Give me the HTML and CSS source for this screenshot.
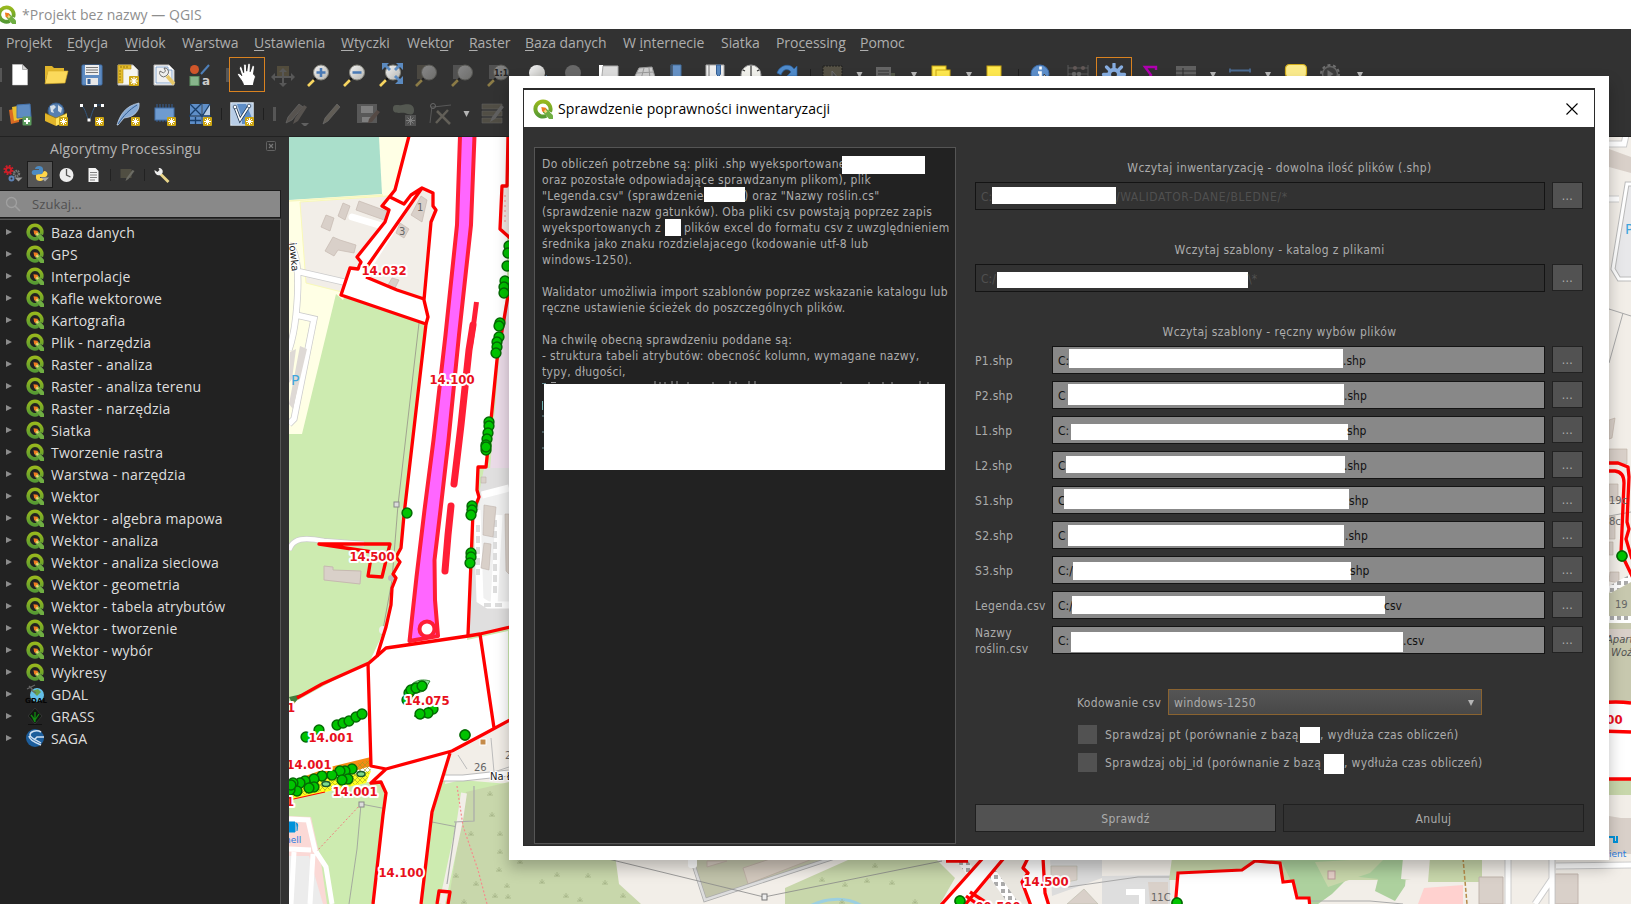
FILE: index.html
```html
<!DOCTYPE html>
<html lang="pl">
<head>
<meta charset="utf-8">
<title>Projekt bez nazwy — QGIS</title>
<link rel="stylesheet" href="styles.css">
</head>
<body>
<svg width="0" height="0" class="defs" aria-hidden="true">
  <defs>
    <linearGradient id="qg" x1="0" y1="0" x2="0" y2="1"><stop offset="0" stop-color="#97b81e"/><stop offset="1" stop-color="#569a33"/></linearGradient>
    <linearGradient id="lens" x1="0" y1="0" x2="1" y2="1"><stop offset="0" stop-color="#f4f4f4"/><stop offset="1" stop-color="#b4b4b0"/></linearGradient>
    <symbol id="q" viewBox="0 0 18 18">
      <path d="M9 2.200a6.800 6.800 0 1 0 3 12.900M15.300 11.500a6.800 6.800 0 0 0-6.300-9.300" fill="none" stroke="url(#qg)" stroke-width="3.600"/>
      <path d="M9 9l3-.5 6 6.200V18h-3.500L9 12z" fill="#6fae42"/>
      <path d="M7.500 7.200l4 .6.5 1.800-2 2.200-1.800-.5z" fill="#ef7c20"/>
      <path d="M11 9.500l2 1.700-1.800 1.600-1.400-1.800z" fill="#f4d27a"/>
    </symbol>
    <symbol id="star" viewBox="0 0 9 9"><rect width="9" height="9" rx="1" fill="#cda612"/><path d="M4.500 1v7M1 4.500h7M2 2l5 5M7 2L2 7" stroke="#fff" stroke-width="1"/></symbol>
    <symbol id="glass" viewBox="0 0 24 24"><path d="M1 23l6-6" stroke="#f7d560" stroke-width="2.600"/><path d="M7 17l2-2" stroke="#111" stroke-width="2"/><circle cx="14" cy="9.500" r="7.500" fill="url(#lens)" stroke="#85857c"/></symbol>
    <symbol id="arrow" viewBox="0 0 8 8"><path d="M1 1h6L4 7z" fill="#b5b5b5"/></symbol>
    <marker id="dot" viewBox="0 0 12 12" refX="6" refY="6" markerWidth="12" markerHeight="12" markerUnits="userSpaceOnUse"><circle cx="6" cy="6" r="4.900" fill="#00c400" stroke="#046b04" stroke-width="1.500"/></marker>
    <marker id="tuft" viewBox="0 0 6 5" refX="3" refY="3" markerWidth="6" markerHeight="5" markerUnits="userSpaceOnUse"><path d="M0 4h6M3 4V0M3 4L1 1.500M3 4l2-2.500" stroke="#a3b387" stroke-width=".8" fill="none"/></marker>
    <pattern id="cobble" width="7" height="7" patternUnits="userSpaceOnUse"><rect width="7" height="7" fill="#fff"/><rect width="4" height="4" fill="#aaa"/></pattern>
    <pattern id="hatch" width="5" height="5" patternUnits="userSpaceOnUse"><path d="M0 0l5 5M5 0L0 5" stroke="#9aa020" stroke-width=".6"/></pattern>
  </defs>
</svg>

<div class="app">
  <header class="titlebar">
    <svg class="title-logo"><use href="#q"/></svg><span class="title-text">*Projekt bez nazwy — QGIS</span>
  </header>

  <nav class="menubar">
    <span>Pro<u>j</u>ekt</span><span><u>E</u>dycja</span><span><u>W</u>idok</span><span>W<u>a</u>rstwa</span><span><u>U</u>stawienia</span><span><u>W</u>tyczki</span><span>Wekt<u>o</u>r</span><span><u>R</u>aster</span><span><u>B</u>aza danych</span><span>W <u>i</u>nternecie</span><span>Siatka</span><span>Pro<u>c</u>essing</span><span><u>P</u>omoc</span>
  </nav>

  <div class="toolbar toolbar-main">
    <i class="grip first"></i>
    <svg viewBox="0 0 24 24"><path d="M4.500 1.500h10l5 5V22h-15z" fill="#fff" stroke="#ccc" stroke-width=".5"/><path d="M14.500 1.500v5h5z" fill="#d6d6d6" stroke="#888" stroke-width=".6"/></svg>
    <svg viewBox="0 0 24 24"><path d="M1 3h7l2 2h10v4H4L1 20z" fill="#e0b52b"/><path d="M4 8h20l-3 12-20 .8z" fill="#fbd95b" stroke="#d8ad27" stroke-width=".6"/></svg>
    <svg viewBox="0 0 24 24"><rect x="2" y="2" width="20" height="20" rx="1" fill="#5f8cc2" stroke="#4473ac"/><rect x="5" y="2" width="14" height="10" fill="#eee"/><path d="M6 4.500h12M6 7h12M6 9.500h12" stroke="#777"/><rect x="6" y="15" width="12" height="7" fill="#e8e8e8"/><rect x="7.500" y="16" width="3" height="5" fill="#345f96"/></svg>
    <svg viewBox="0 0 24 24"><path d="M2 2h15l5 5v15H2z" fill="#f5f5f0" stroke="#bbb"/><path d="M2 2h13v4H7v14H2z" fill="#e4bc2c" stroke="#b28a10" stroke-width=".6"/><path d="M5 3v2M8 3v2M11 3v2M3 8h2M3 11h2M3 14h2M3 17h2" stroke="#7a5b00" stroke-width=".7"/><use href="#star" x="13" y="13" width="10" height="10"/></svg>
    <svg viewBox="0 0 24 24"><path d="M2 2h15l5 5v15H2z" fill="#fff" stroke="#bbb"/><path d="M4 4h12v3h4v13H4z" fill="#f0f0f0" stroke="#6d95c7" stroke-width=".8"/><path d="M15 13l7 8" stroke="#e7c869" stroke-width="3.500"/><path d="M8 8a4 4 0 0 0 6 5l2-2a4 4 0 0 0-4-6l1.500 3-2 2z" fill="#eee" stroke="#555" stroke-width=".8"/></svg>
    <svg viewBox="0 0 24 24"><circle cx="6.500" cy="6.500" r="4.500" fill="#d0562a"/><path d="M13 11L21 2" stroke="#4f80ba" stroke-width="2"/><rect x="2" y="13.500" width="9" height="9" fill="#87b58b" stroke="#5c8d61"/><text x="14" y="22" class="glyph-a">a</text></svg>
    <i class="grip mid"></i>
    <svg class="framed hand" viewBox="0 0 24 24"><path d="M8.500 23.500C8 19 3.500 15.500 2 12c.5-1.700 2.800-1.200 4.500 1.200L4 5.500c0-2.200 2.200-2.200 2.800-.5L8.500 10V2.500c.2-2 2.500-1.800 2.800 0l.4 6L12.800 1.500c.4-1.700 2.500-1.400 2.700.3l-.2 7.200L17.300 3.500c.6-1.500 2.600-1 2.500.8l-1 7.500c2.200 1 2.500 3 1 5.500l-1.300 6.200z" fill="#fff" stroke="#222" stroke-width=".9"/></svg>
    <svg viewBox="0 0 24 24" class="dim"><rect x="6" y="3" width="12" height="12" fill="#7a6c4a"/><path d="M12 6v16M4 14h16" stroke="#888" stroke-width="2"/><path d="M12 24l-4-4h8zM0 14l4-4v8zM24 14l-4-4v8zM12 5L8 9h8z" fill="#888"/></svg>
    <svg viewBox="0 0 24 24"><use href="#glass"/><path d="M14 5v9M9.500 9.500h9" stroke="#4a7ab5" stroke-width="2.500"/></svg>
    <svg viewBox="0 0 24 24"><use href="#glass"/><path d="M9.500 9.500h9" stroke="#4a7ab5" stroke-width="2.500"/></svg>
    <svg viewBox="0 0 24 24"><use href="#glass"/><path d="M3 0h7L8 2l4 4-2 2-4-4-3 3zM24 0h-7l2 2-4 4 2 2 4-4 3 3zM24 21v-8l-3 3-4-4-2 2 4 4-3 3z" fill="#5b8ac0"/></svg>
    <svg viewBox="0 0 24 24" class="dim"><rect x="2" y="2" width="14" height="14" fill="#6b6454"/><use href="#glass"/></svg>
    <svg viewBox="0 0 24 24" class="dim"><rect x="2" y="2" width="14" height="14" fill="#777"/><use href="#glass"/></svg>
    <svg viewBox="0 0 24 24" class="dim"><rect x="2" y="2" width="14" height="14" fill="#777"/><use href="#glass"/><text x="7" y="13" class="one">1:1</text></svg>
    <svg viewBox="0 0 24 24"><circle cx="14" cy="10" r="8" fill="url(#lens)"/><path d="M17 17l7-5v9z" fill="#5b8ac0"/></svg>
    <svg viewBox="0 0 24 24" class="dim"><circle cx="14" cy="10" r="8" fill="#aaa"/></svg>
    <svg viewBox="0 0 24 24"><path d="M4 2h4v20H4z" fill="#fff"/><path d="M8 3h15v19H6z" fill="#dcdcdc" stroke="#aaa"/><use href="#star" x="16" y="13.500" width="9" height="9"/></svg>
    <svg viewBox="0 0 24 24"><path d="M8 5l13-1 3 10-22 3z" fill="#ccc" stroke="#999"/><path d="M6 10l17-1M13 5l-3 11M18 5l1 11" stroke="#999"/></svg>
    <svg viewBox="0 0 24 24"><path d="M4 2h10v20H4z" fill="#6692c6" stroke="#44709f"/><path d="M5 2v20" stroke="#333"/><use href="#star" x="13" y="13.500" width="9" height="9"/></svg>
    <svg viewBox="0 0 24 24"><path d="M3 2h18v20H3z" fill="#eee" stroke="#aaa"/><path d="M6 2v20" stroke="#777"/><path d="M13.500 2h4v9l-2 3-2-3z" fill="#5b8ac0" stroke="#345f96"/></svg>
    <svg viewBox="0 0 24 24"><circle cx="12" cy="12" r="10" fill="#f1f1ec" stroke="#999"/><path d="M12 4v9l4 3M12 2.500v2M4 7l2 1M20 7l-2 1" stroke="#333" stroke-width="1.200" fill="none"/></svg>
    <svg viewBox="0 0 24 24"><path d="M2 10C5 1 16 0 19 6l3-3v10H12l4-4c-3-4-8-3-10 3z" fill="#4f8bcb" stroke="#2b62a0" stroke-width=".7"/></svg>
    <i class="rule w10"></i>
    <svg viewBox="0 0 24 24" class="dim2"><rect x="2" y="3" width="19" height="18" fill="#6d6653" stroke="#15150f" stroke-dasharray="2 1"/><path d="M11 8v12l3-3h5z" fill="#555" stroke="#999"/></svg>
    <svg viewBox="0 0 8 8" class="drop w17"><use href="#arrow"/></svg>
    <svg viewBox="0 0 24 24" class="dim2"><path d="M2 4h15v18H2z" fill="#888"/><path d="M4 8h11M4 11h11M4 14h11" stroke="#333"/><path d="M17 10h4v10h-4z" fill="#687058"/></svg>
    <svg viewBox="0 0 8 8" class="drop w20"><use href="#arrow"/></svg>
    <svg viewBox="0 0 24 24"><rect x="2" y="3" width="14" height="13" fill="#ffe94f" stroke="#c9a514"/><rect x="6" y="7" width="14" height="12" fill="#ffe94f" stroke="#c9a514"/><rect x="14" y="14" width="8" height="5" fill="#dd4b45"/></svg>
    <svg viewBox="0 0 8 8" class="drop w18"><use href="#arrow"/></svg>
    <svg viewBox="0 0 24 24"><rect x="3" y="3" width="14" height="16" fill="#ffe94f" stroke="#c9a514"/><circle cx="20" cy="16" r="3" fill="#5b8ac0"/></svg>
    <i class="rule w9"></i>
    <svg viewBox="0 0 24 24"><circle cx="11" cy="11" r="9" fill="#5d8fcb" stroke="#3c6dab"/><path d="M11.500 3.500v3M9 9.500h2.500v7" stroke="#fff" stroke-width="2.600" fill="none"/><path d="M15 11v9l6-3z" fill="#fff" stroke="#222" stroke-width=".7"/></svg>
    <svg viewBox="0 0 24 24" class="dim abacus"><path d="M2 2v20M22 2v20M2 5h20M2 11h20" stroke="#8a8a8a"/><circle cx="9" cy="5" r="2" fill="#a08784"/><circle cx="17" cy="5" r="2" fill="#a08784"/><circle cx="8" cy="11" r="2.200" fill="#aaa"/><circle cx="13" cy="11" r="2.200" fill="#aaa"/></svg>
    <svg class="framed" viewBox="0 0 24 24"><path d="M12 1v22M1 12h22M4.200 4.200l15.600 15.600M19.800 4.200L4.200 19.800" stroke="#86ade0" stroke-width="3.400" stroke-linecap="round"/><circle cx="12" cy="12" r="7" fill="#86ade0"/><circle cx="12" cy="12" r="3" fill="#323232"/></svg>
    <svg viewBox="0 0 24 24"><path d="M18 7V4H7l6 8-6 8h11v-3" fill="none" stroke="#b000b0" stroke-width="2.400"/></svg>
    <svg viewBox="0 0 24 24" class="dim2"><rect x="2" y="3" width="20" height="19" fill="#808080"/><path d="M2 8h20M2 12h20M2 16h20M9 5v17" stroke="#333" stroke-width="1.200"/></svg>
    <svg viewBox="0 0 8 8" class="drop w18"><use href="#arrow"/></svg>
    <svg viewBox="0 0 24 24"><path d="M2 5.500v4M22 5.500v4M2 7.500h20" stroke="#4b6b92" stroke-width="1.800"/><path d="M2 14h20v6H2z" fill="#eee"/><path d="M5 14v3M8 14v3M11 14v3M14 14v3M17 14v3" stroke="#333"/></svg>
    <svg viewBox="0 0 8 8" class="drop w20"><use href="#arrow"/></svg>
    <svg viewBox="0 0 24 24"><rect x="1.500" y="1.500" width="21" height="13" rx="4" fill="#fbeb8d" stroke="#d1ac1b" stroke-width="1.200"/><path d="M9 14l4 4v-4z" fill="#fbeb8d"/></svg>
    <svg viewBox="0 0 24 24" class="w32 dim2"><circle cx="12" cy="11" r="9" fill="none" stroke="#999" stroke-width="2" stroke-dasharray="3 2.650"/><circle cx="12" cy="11" r="7.500" fill="#444" stroke="#888" stroke-width="1.500"/><path d="M9.500 7v8l6-4z" fill="#999"/></svg>
    <svg viewBox="0 0 8 8" class="drop w28"><use href="#arrow"/></svg>
  </div>

  <div class="toolbar toolbar-layers">
    <i class="grip first"></i>
    <svg viewBox="0 0 24 24"><path d="M1 8l10-2v14l-8 2z" fill="#d96a23"/><path d="M4 5l11-2 2 13-11 3z" fill="#eabf2d"/><path d="M9 3l13-1 1 13-14 1z" fill="#5f8cc2" stroke="#4473ac"/><rect x="14.500" y="14.500" width="9" height="9" rx="1" fill="#5c9c5e"/><path d="M19 16v6M16 19h6" stroke="#fff" stroke-width="2"/></svg>
    <svg viewBox="0 0 24 24"><circle cx="12" cy="9" r="8" fill="#567fb0" stroke="#375d8b"/><path d="M6 4l4-1 2 2-3 3 1 3-3-1zM14 3l4 3-1 5-3-2z" fill="#d5dfe8"/><path d="M1 11l11 5v8L1 19z" fill="#e2b52a"/><path d="M12 16l11-5v8l-11 5z" fill="#ffe45e"/><path d="M1 11l11 5 11-5" fill="none" stroke="#8b6c0c" stroke-width=".7"/><use href="#star" x="15" y="15" width="9" height="9"/></svg>
    <svg viewBox="0 0 24 24"><path d="M1 3c5 4 5 11 8 15 3-3 3-12 8-15h6" fill="none" stroke="#31567f" stroke-width="1"/><path d="M0 2h3v3H0zM14 2h3v3h-3zM21 2h3v3h-3zM7.500 16.500h3v3h-3z" fill="#fff"/><use href="#star" x="15" y="15" width="9" height="9"/></svg>
    <svg viewBox="0 0 24 24"><path d="M1 23C4 13 9 4 23 1c1 7-4 14-15 15L2 23z" fill="#88abd5" stroke="#c9daee" stroke-width=".7"/><path d="M2 22C8 13 13 8 21 3" stroke="#345f96" fill="none"/><use href="#star" x="15" y="15" width="9" height="9"/></svg>
    <svg viewBox="0 0 24 24"><path d="M5 2v18M8 2v18M11 2v18M14 2v18M17 2v18M20 2v18" stroke="#345f96"/><rect x="3" y="6" width="19" height="12" fill="#6e9bd0" stroke="#4473ac"/><use href="#star" x="15" y="15" width="9" height="9"/></svg>
    <svg viewBox="0 0 24 24"><rect x="2" y="2" width="20" height="20" fill="#b9cde4"/><path d="M2 2h11v11H2zM15 2h7L15 13zM2 15h11v7H2z" fill="#5e8ec8"/><path d="M2 2l11 11M13 2L2 13M15 13l7-11M2 18.500h11M7.500 15v7M14 1v22M1 14h22" stroke="#183d68" stroke-width="1.300"/><use href="#star" x="15" y="15" width="9" height="9"/></svg>
    <i class="rule w6"></i>
    <svg viewBox="0 0 24 24"><rect x="1" y="1" width="22" height="22" fill="#5e8ec8" stroke="#dce7f3" stroke-width="1.500"/><path d="M2 2l5 0 5 14V22H2zM16 2h6v14z" fill="#b8cde6"/><path d="M5 5l5 13 9-14" fill="none" stroke="#1e3550" stroke-width="3.200"/><path d="M5 5l5 13 9-14" fill="none" stroke="#fff" stroke-width="1.600"/><circle cx="5" cy="5" r="1.800" fill="#fff" stroke="#1e3550" stroke-width=".7"/><circle cx="19" cy="4" r="1.800" fill="#fff" stroke="#1e3550" stroke-width=".7"/><use href="#star" x="15" y="15" width="9" height="9"/></svg>
    <i class="rule w6"></i>
    <i class="grip mid2"></i>
    <svg viewBox="0 0 24 24" class="dim"><path d="M2 21l2-6L15 2l4 3L8 18z" fill="#857b73" stroke="#aaa" stroke-width=".7"/><path d="M9 22l2-6L20 3l3 2-9 14z" fill="#857b73"/><path d="M17 21h8l-4 4z" fill="#999"/></svg>
    <svg viewBox="0 0 24 24" class="dim"><path d="M3 22l2-6L17 2l3 3L8 19z" fill="#9a9383" stroke="#bbb" stroke-width=".6"/></svg>
    <svg viewBox="0 0 24 24" class="dim"><rect x="1" y="2" width="20" height="19" fill="#888"/><path d="M5 4h12v7H5zM6 15h9v5H6z" fill="#ddd"/><path d="M12 21l1-4 8-9 3 2-8 10z" fill="#80675d"/></svg>
    <svg viewBox="0 0 24 24" class="dim"><path d="M1 7c0-6 5-3 9-4s12-2 12 5-6 4-9 3-12 2-12-4z" fill="#7f8878"/><rect x="13" y="13" width="11" height="11" fill="#777"/><path d="M18.500 14v9M14 18.500h9M15.500 15.500l6 6M21.500 15.500l-6 6" stroke="#ddd"/></svg>
    <svg viewBox="0 0 24 24" class="dim"><path d="M4 4l-2 17M5 5l18-2" stroke="#888"/><circle cx="5" cy="4" r="2.500" fill="none" stroke="#aaa"/><path d="M8 21L20 8M9 9l13 13" stroke="#9c9686" stroke-width="2.500"/></svg>
    <svg viewBox="0 0 8 8" class="drop w17"><use href="#arrow"/></svg>
    <svg viewBox="0 0 24 24" class="dim"><path d="M1 2h20v5H1zM1 9h20v5H1zM1 16h20v5H1z" fill="#77705c" stroke="#999" stroke-width=".6"/><path d="M9 20l2-5L20 3l3 2-9 12z" fill="#999"/></svg>
  </div>

  <main class="workspace">
    <aside class="panel">
      <div class="panel-title"><span>Algorytmy Processingu</span><svg class="panel-close" viewBox="0 0 10 10"><rect x=".5" y=".5" width="9" height="9" rx="1" fill="none" stroke="#626262"/><path d="M3 3l4 4M7 3L3 7" stroke="#777" stroke-width="1.200"/></svg></div>
      <div class="panel-tools">
        <svg viewBox="0 0 20 20" class="ptool"><circle cx="5" cy="5" r="3.600" fill="none" stroke="#cc1e28" stroke-width="3" stroke-dasharray="1.600 1.200"/><circle cx="5" cy="5" r="2.500" fill="none" stroke="#cc1e28" stroke-width="2"/><circle cx="13" cy="8.500" r="2.500" fill="none" stroke="#777" stroke-width="2.500" stroke-dasharray="1.500 .6"/><circle cx="8" cy="13.500" r="2" fill="none" stroke="#5d82b5" stroke-width="2"/><path d="M11 12.500h8l-4 4z" fill="#999"/></svg>
        <span class="ptool on"><svg viewBox="0 0 20 20"><path d="M4 10c-3 0-3-5 0-5h5V4H5c0-4 8-4 8 0v4c0 2-6 1-7 2z" fill="#4c8ac2"/><path d="M14 6c5 0 4 6 1 6h-5v1h4c0 4-8 4-8 0 0-5 0-3 6-4z" fill="#ffd54a"/><path d="M11 12.500h8l-4 4z" fill="#aaa"/></svg></span>
        <svg viewBox="0 0 20 20" class="ptool"><circle cx="10" cy="10" r="7" fill="#eee"/><path d="M10 4v6l4 2" fill="none" stroke="#555" stroke-width="1.300"/></svg>
        <svg viewBox="0 0 20 20" class="ptool"><path d="M5 3h7l3 3v11H5z" fill="#f4f4f4"/><path d="M6.500 7.500h7M6.500 10h7M6.500 12.500h7M6.500 15h5" stroke="#777" stroke-width=".9"/></svg>
        <i class="prule"></i>
        <svg viewBox="0 0 20 20" class="ptool"><path d="M3 4h11v9H3z" fill="#504e42"/><path d="M8 16l1-3 6-8 2 1-6 8z" fill="#6c6c64"/></svg>
        <i class="prule"></i>
        <svg viewBox="0 0 20 20" class="ptool"><path d="M9 9l8 8" stroke="#ead68a" stroke-width="2.800"/><path d="M3 5c0 4 3 6 6 5l2-2c1-3-1-5-4-5l1 2-2 2z" fill="#eee"/></svg>
      </div>
      <div class="search"><svg viewBox="0 0 16 16"><circle cx="6.500" cy="6.500" r="5" fill="none" stroke="#a0a0a0" stroke-width="1.300"/><path d="M10 10l5 5" stroke="#a0a0a0" stroke-width="1.600"/></svg><span>Szukaj...</span></div>
      <ul class="tree">
        <li><i></i><svg><use href="#q"/></svg>Baza danych</li>
        <li><i></i><svg><use href="#q"/></svg>GPS</li>
        <li><i></i><svg><use href="#q"/></svg>Interpolacje</li>
        <li><i></i><svg><use href="#q"/></svg>Kafle wektorowe</li>
        <li><i></i><svg><use href="#q"/></svg>Kartografia</li>
        <li><i></i><svg><use href="#q"/></svg>Plik - narzędzia</li>
        <li><i></i><svg><use href="#q"/></svg>Raster - analiza</li>
        <li><i></i><svg><use href="#q"/></svg>Raster - analiza terenu</li>
        <li><i></i><svg><use href="#q"/></svg>Raster - narzędzia</li>
        <li><i></i><svg><use href="#q"/></svg>Siatka</li>
        <li><i></i><svg><use href="#q"/></svg>Tworzenie rastra</li>
        <li><i></i><svg><use href="#q"/></svg>Warstwa - narzędzia</li>
        <li><i></i><svg><use href="#q"/></svg>Wektor</li>
        <li><i></i><svg><use href="#q"/></svg>Wektor - algebra mapowa</li>
        <li><i></i><svg><use href="#q"/></svg>Wektor - analiza</li>
        <li><i></i><svg><use href="#q"/></svg>Wektor - analiza sieciowa</li>
        <li><i></i><svg><use href="#q"/></svg>Wektor - geometria</li>
        <li><i></i><svg><use href="#q"/></svg>Wektor - tabela atrybutów</li>
        <li><i></i><svg><use href="#q"/></svg>Wektor - tworzenie</li>
        <li><i></i><svg><use href="#q"/></svg>Wektor - wybór</li>
        <li><i></i><svg><use href="#q"/></svg>Wykresy</li>
        <li><i></i><svg viewBox="0 0 18 18"><circle cx="11" cy="10" r="7" fill="#63bfe8"/><path d="M6 6l6-2 3 3-4 4-2-2z" fill="#6aa04a"/><path d="M1 4l8-4M3 1l4 4M5 5l5 3" stroke="#666" stroke-width="1.300"/><text x="-1" y="18" class="gdal">GDAL</text></svg>GDAL</li>
        <li><i></i><svg viewBox="0 0 18 18"><path d="M9 1l7 8-7 8-7-8z" fill="#111a11" stroke="#333"/><path d="M9 15V5M9 13L5 8M9 13l4-6M9 15l-2-4" stroke="#128c12" stroke-width="1.300"/><path d="M2 17.500h14" stroke="#111"/></svg>GRASS</li>
        <li><i></i><svg viewBox="0 0 18 18"><circle cx="9" cy="9" r="9" fill="#1c5d9b"/><path d="M15 3C10 0 4 3 4 6s8 6 11 8M18 8h-7l-3 3M3 7c0 4 7 7 12 9" stroke="#cfe0f2" stroke-width="1.500" fill="none"/></svg>SAGA</li>
      </ul>
    </aside>

    <svg class="map" viewBox="289 137 1342 767">
      <rect x="289" y="137" width="1342" height="767" fill="#f2eee8"/>
      <!-- land cover, west -->
      <path d="M289 137h220v767H289z" fill="#cdebb0"/>
      <path d="M289 137h125l-21 53-50 110-7-6-34 140h-13z" fill="#ffffe5"/>
      <path d="M289 137h90l3 57-93 6z" fill="#aadfcb"/>
      <path d="M289 201l94-6" stroke="#f7f7c0" stroke-width="1.500"/>
      <path d="M300 202l87-6 50-10-6 115-50 5-39-14-36-9z" fill="#f2eee8" stroke="#f9f9b8"/>
      <path d="M289 245c8 5 11 30 7 70l18 4-20 100-5 5M296 271l48 11M289 350c5-15 6-25 7-35" fill="none" stroke="#ccc" stroke-width="7"/>
      <path d="M289 245c8 5 11 30 7 70l18 4-20 100-5 5M296 271l48 11M289 350c5-15 6-25 7-35" fill="none" stroke="#fff" stroke-width="5.500"/>
      <path d="M300 346l7 3-14 60-4-5zM290 352l6-3-4 30-3 4z" fill="#ded9d5"/>
      <path d="M352 217l30 9" stroke="#fff" stroke-width="7" stroke-linecap="round"/>
      <g fill="#d9d0c9" stroke="#c6b9b0" stroke-width=".7"><path d="M326 215l8 3-4 13-9-4zM343 203l7 3-5 14-7-4zM359 201l30 11-2 9-31-11zM333 237l7 3 16 5-2 8-16-3-4 6-9-5zM420 197l7 4-5 22-11-7zM400 223l9 6-5 9-8-5zM392 278l7 2-4 8-7-3z"/></g>
      <path d="M324 566l9 1v3l28 1-1 13-36-4z" fill="#d9d0c9" stroke="#c6b9b0"/>
      <path d="M289 550c4-12 15-13 35-9l40 3" fill="none" stroke="#ccc" stroke-width="6"/><path d="M289 550c4-12 15-13 35-9l40 3" fill="none" stroke="#fff" stroke-width="4.500"/>
      <path d="M419 323l-21 182-6 75-10 55" fill="none" stroke="#9c9c8c" stroke-width=".9"/>
      <rect x="394" y="502" width="5" height="5" fill="#ddd" stroke="#888"/><circle cx="391" cy="578" r="3" fill="#bbb"/><circle cx="383" cy="630" r="4" fill="#eee"/>
      <!-- southwest: fuel station and roads -->
      <path d="M289 816l22 1 10 45 6 42h-38z" fill="#fbd9d6"/>
      <path d="M289 856h20l14 48h-34z" fill="#ececec"/>
      <path d="M289 819l19 1 7 30 11 17 6 37M289 849l22 1M294 852l-3 52M313 854l-3 50" fill="none" stroke="#fff" stroke-width="5"/>
      <path d="M361 804l-44 47" stroke="#f08080" stroke-dasharray="2 2"/>
      <path d="M361 804l-4 45-8 55M361 804l26 5M432 822l77 15" stroke="#999" fill="none" stroke-width=".8"/><rect x="359" y="802" width="5" height="5" fill="#ddd" stroke="#888"/>
      <path d="M289 822h6v10h-6zM296 823c3 0 1 6 1 8" fill="#0092da" stroke="#0092da"/>
      <!-- south residential and scrub -->
      <path d="M449 752l60-34v66l-48-4-16 4z" fill="#f2eee8"/>
      <path d="M466 792l43-10v122h-61z" fill="#c8d7ab"/>
      <path d="M464 793l-4 27-18 84" stroke="#f2eee8" stroke-width="6" fill="none"/>
      <path d="M443 778h20l46-5" fill="none" stroke="#bbb" stroke-width="7"/><path d="M443 778h20l46-5" fill="none" stroke="#fff" stroke-width="5"/>
      <path d="M454 822l20-1v-35M456 822l-9 62" fill="none" stroke="#aaa" stroke-width="1.200"/>
      <path d="M457 786l6 40 15 44 9 34" stroke="#f58c8c" stroke-dasharray="2 2" stroke-width="1.200" fill="none"/>
      <path d="M491 738l3 34 15-5M458 755l9 14" stroke="#bbb" fill="none"/><rect x="480" y="739" width="6" height="6" fill="#c58b4a" stroke="#fff"/>
      <!-- east of corridor -->
      <path d="M502 186h7v52l-9-9z" fill="#f2e9e4"/><path d="M505 195v28" stroke="#f58c8c" stroke-dasharray="2 3"/>
      <path d="M507 290h2v180h-19l8-100z" fill="#ebdbe8"/>
      <path d="M484 468h25v160l-40 7 6-120z" fill="#e0dfdf"/>
      <path d="M481 492h28v111h-30l-4-60z" fill="#f0f0f0"/><path d="M477 510l3 90 8 5h21M499 515l-5 90M482 495l27-7" stroke="#fff" stroke-width="7" fill="none"/><path d="M478 525v50M495 520v75M484 605h22" stroke="#ddd" stroke-width="4" stroke-dasharray="7 4"/>
      <path d="M484 505l12 2-3 30-10-2zM484 543l7 1-2 26-8-2zM505 514h4v60l-3-3zM481 477h5v6h-5z" fill="#d9d0c9" stroke="#c0b4ac" stroke-width=".6"/>
      <!-- surveyed corridor -->
      <g fill="#fff">
        <path d="M408 137h100l-1 49h-5l-2 43 7 7v54l-10 70-11 107h-8l-1 23 2 10-7 10-5 130 41-9v91l-15 9-42 23-18 59-11 92h-48l10-90 3-22-5-11H367l-78 18V705l60-33 20-9 17-36 9-53 6-26 3-33 22-191-85-29 9-27h8l3-7-4-5 28-35 4-12-7-4 8-9 5-7z"/>
      </g>
      <path d="M422 189l11 4v13l3 4-5 12-7 78-58-23z" fill="#f2eee8"/>
      <path d="M421 196l6 4-5 22-11-7zM400 223l9 6-5 9-8-5zM392 278l7 2-4 8-7-3z" fill="#d9d0c9" stroke="#c6b9b0" stroke-width=".7"/>
      <text x="417" y="211" class="house">1</text><text x="399" y="235" class="house">3</text>
      <path d="M460 137L457 225 445.500 335 433.500 440 424.500 510 416.500 577 409 640 439 636 435 600 434.500 560 440.500 510 448.500 440 459 335 471 225 474.500 137z" fill="#ff66ff"/>
      <g fill="none" stroke="#ff1e35" stroke-linejoin="round">
        <path d="M460 136L457 225 445.500 335 433.500 440 424.500 510 416.500 577 409.500 641 438 636 435 600 434.500 560 440.500 510 448.500 440 459 335 471 225 474.500 136" stroke-width="4"/>
        <path d="M473 325L469 350 461 425 454 484M451 506L448 535 445 571" stroke-width="7" stroke-linecap="round"/>
      </g>
      <path d="M476.500 302l-3 23-3 20" stroke="#ff1e35" stroke-width="5" fill="none"/>
      <circle cx="427" cy="629" r="7.500" fill="#fff" stroke="#ff1e35" stroke-width="4"/>
      <!-- verges with trees -->
      <path d="M330 767l41-10v9l-60 18-22 4v-6z" fill="#f48b14"/><path d="M289 787l60-12 22-4-5 12-77 17z" fill="#ffff1f"/><path d="M289 787l82-28v10l-5 13-77 16z" fill="url(#hatch)"/>
      <path d="M405 695c5-14 15-17 25-14l-6 10-11 3zM414 716c8-3 15-7 22-16 4 6-1 14-15 19z" fill="#8fe09a" stroke="#157a15" stroke-width=".8"/>
      <path d="M289 697l13-3-9 11z" fill="#417d3c"/>
      <!-- plot boundaries -->
      <g class="bound">
        <path d="M409 136L395 190 382 206 389 210 385 222 357 257 361 262 358 269 350 268 341 295 426 324 404 515 401 548 396 557 400 562 393 574 396 578 392 588 391 605 386 627 377 656 369 663 322 684 297 698"/>
        <path d="M390 197L404 204 411 195 422 188 433 193 433 206 436 210 431 222 424 300 428 317 426 324M422 188L366 268M366 277L397 290 424 299"/>
        <path d="M508 136L507 186 502 186 500 229 510 238M509 290L497 360 491 420 486 467 478 467 477 490 479 497 473 512 468 635"/>
        <path d="M377 656L386 648 400 646 468 636 480 634 510 627M368 663L371 766 386 769 452 751 484 734 510 720M480 634L494 728M386 769L371 783 381 782 386 793 383 815 373 904M450 753L432 812 421 904"/>
        <path d="M319 544H390L382 577 368 576 372 552zM437 904L439 891 450 892 448 904"/>
      </g>
      <path d="M289 800l36-8" stroke="red" stroke-width="1.200"/>
      <g class="dots">
        <polyline points="509,246 508,253 507,266 505,281 504,287 504,293 500,323 499,326 499,337 497,342 497,347 496,353 489,422 489,426 488,433 487,439 486,445 486,450 486,447 472,506 472,510 471,515 407,513"/>
        <polyline points="471,553 471,557 470,563"/>
        <polyline points="306,737 319,730 337,725 343,723 349,721 356,717 362,714"/>
        <polyline points="407,700 409,693 411,690 416,688 422,686"/><polyline points="433,709 428,713 420,714"/><polyline points="465,735 465,735"/>
        <polyline points="352,769 345,771 340,771 332,775 322,776 314,779 305,781 300,783 293,783 348,779 342,780 314,787 309,788 297,791 290,790 291,785"/>
      </g>
      <g fill="none" stroke="#1c5b30" stroke-width="1.500"><ellipse cx="326" cy="784" rx="4" ry="2.500" fill="#7ddb8d"/><ellipse cx="361" cy="774" rx="4" ry="2.500" fill="#7ddb8d"/></g>
      <!-- south strip beneath the dialog -->
      <path d="M509 840h104l6 44 22 20H509z" fill="#c8d7ab"/>
      <path d="M785 904v-16l90-40h50l30 30-15 26z" fill="#c8d7ab"/>
      <path d="M693 855h145l-134 44z" fill="#c1c3aa"/><path d="M748 884l-5-16 30-10h42zM707 861h20l-20 6z" fill="#d2c8bd" stroke="#bdb0a5"/>
      <path d="M691 857l14 43 140-46" fill="none" stroke="#aaa" stroke-width="4"/><path d="M691 857l14 43 140-46" fill="none" stroke="#ddd" stroke-width="2.500"/><rect x="688" y="857" width="9" height="11" rx="3" fill="#fff"/>
      <path d="M600 857l164 40 178-36" stroke="#888" fill="none" stroke-width=".8"/><rect x="762" y="894" width="5" height="6" fill="#eee" stroke="#777"/>
      <path d="M810 906c18-9 38-9 52 0" fill="none" stroke="#9ccfe0" stroke-width="3"/>
      <path d="M970 904l34-46h28l10 46z" fill="#e9e6df"/><path d="M960 858l12 16M990 870l24 34" stroke="url(#cobble)" stroke-width="9"/>
      <path d="M1050 858h52v20l-50 18z" fill="#dcdcdc"/><path d="M1051 866h26v14l-16 3-10-4zM1067 904l17-15 14 15z" fill="#d9d0c9" stroke="#bba" stroke-width=".6"/>
      <path d="M1102 876l68-1v29h-68z" fill="#dedede"/><path d="M1126 892h16v12" fill="none" stroke="#fff" stroke-width="6"/><path d="M1068 887l70-10h32" stroke="#aaa" fill="none"/><path d="M1148 882h20v22h-18z" fill="#d9d0c9"/>
      <path d="M1172 858h250l-1 22h-252z" fill="#c8d7ab"/><path d="M1280 858h128l-3 28-10 15-20-10 3-12-28-3-18 18-14 10h-16z" fill="#add19e"/><path d="M1315 862l70-4-15 15-42 14z" fill="#c8d7ab"/><path d="M1403 858h28v24l-30-3z" fill="#f2eee8"/><path d="M1430 858h52v24h-54z" fill="#c8d7ab"/>
      <path d="M1424 888l39-3v19h-45z" fill="#ffd1cf"/><path d="M1310 901h60l33 3" fill="none" stroke="#aaa"/><rect x="1328" y="871" width="7" height="8" fill="#e5d0c8" stroke="#b99"/>
      <path d="M1479 877h24v27h-24zM1555 874h23v30h-23z" fill="#d9d0c9" stroke="#c0b4ac"/><path d="M1508 858v46M1552 858v46M1556 866l75-1M1535 904l17-25" stroke="#ccc" stroke-width="7"/><path d="M1508 858v46M1552 858v46M1556 866l75-1M1535 904l17-25" stroke="#fff" stroke-width="5"/><path d="M1463 858l4 46" stroke="#b68b4a" stroke-dasharray="4 2" stroke-width="1.500"/>
      <path d="M1178 873L1242 870 1255 861 1280 863 1283 882 1293 881 1297 898 1309 898 1310 908H1175z" fill="#fff" stroke="red" stroke-width="3.200"/>
      <path d="M983 858L942 904h23l39-46z" fill="#fff"/>
      <path d="M1028 858l-5 10 5 5-6 9 9 22h18l-4-11-2-35z" fill="#fff"/>
      <g class="bound"><path d="M983 858L941 905M1004 858L964 906M1028 858L1023 868 1028 873 1022 882 1031 906M1043 858L1045 893 1049 906M970 892L990 905M966 896L980 906M946 861H968"/></g>
      <polyline class="pin" points="1177,903 1177,903"/><polyline class="pin" points="960,901 960,901"/>
      <g class="tufts"><polyline points="490,794 492,815 471,834 500,834 500,852 499,870 456,876 476,884 507,886 495,896 464,902 520,862 557,875 588,876 605,883 542,882 508,897 566,896 580,900 623,896 875,866 867,881 892,883 845,885 822,880 842,902 915,902"/></g>
      <text x="1151" y="901" class="house">11C</text><text x="474" y="771" class="house">26</text><text x="505" y="759" class="house">2</text>
      <!-- east strip -->
      <path d="M1609 149l22 8v16l-22-6z" fill="#d9d0c9"/><path d="M1609 144h15l2-9M1609 199h10" stroke="#ccc" stroke-width="7" fill="none"/><path d="M1609 144h15l2-9M1609 199h10" stroke="#fff" stroke-width="5" fill="none"/>
      <path d="M1631 184h-4l-14 85 6 10h12" fill="#e8e8ea" stroke="#bbb" stroke-width="5"/><path d="M1631 184h-4l-14 85 6 10h12" fill="none" stroke="#fff" stroke-width="3"/>
      <path d="M1609 309l22 7M1623 313l-14 50M1609 516l22-4" stroke="#aaa" fill="none"/><path d="M1609 420l6-2-3 20-3 1zM1609 449h18v15h-18zM1609 484h9v17h-9zM1609 516h6v23h-6zM1609 542h4v13h-4zM1610 572h9v11l-10-2z" fill="#d9d0c9" stroke="#bcaea3" stroke-width=".6"/>
      <path d="M1609 593l22-13v121h-22z" fill="#c7c8ae"/><path d="M1609 590l24-13" stroke="url(#cobble)" stroke-width="7"/><path d="M1609 616h22v7h-22z" fill="url(#cobble)"/><path d="M1609 629h22v10h-22z" fill="#d9d0c9"/>
      <path d="M1595 703h36v76h-36z" fill="#fff"/><path d="M1595 780h36v15h-36z" fill="#c8d7ab"/><path d="M1621 818h10v36h-22v-38z" fill="#d9d0c9"/>
      <g class="bound"><path d="M1600 463h18l10 4 1 10-2 45 2 7-3 10 6 20M1600 471h15q9 1 9 12l-3 70 12 25M1600 703q16-2 31 0M1600 731l31 1M1600 779h31"/></g>
      <polyline class="pin" points="1622,556 1622,556"/>
      <text x="1625" y="234" class="park">P</text><text x="291" y="385" class="park">P</text><text x="1615" y="608" class="house">19</text><text x="1609" y="504" class="house">19c</text><text x="1609" y="525" class="house">8c</text>
      <text x="1606" y="643" class="place">Apart</text><text x="1611" y="656" class="place">Woź</text>
      <path d="M1609 837h5v5h3v-6" stroke="#0092da" stroke-width="2" fill="none"/><text x="1609" y="857" class="bluelab">ient</text><text x="285" y="843" class="bluelab">hell</text>
      <text x="490" y="780" class="street">Na Ł</text><text x="289" y="243" class="street" transform="rotate(84 289 243)">iowka</text>
      <g class="plot">
        <text x="384" y="275">14.032</text><text x="452" y="384">14.100</text><text x="372" y="561">14.500</text><text x="427" y="705">14.075</text><text x="331" y="742">14.001</text><text x="309" y="769">14.001</text><text x="355" y="796">14.001</text><text x="401" y="877">14.100</text><text x="291" y="712">1</text><text x="290" y="806">1</text><text x="1046" y="886">14.500</text><text x="998" y="911">00.500</text><text x="1600" y="724">14.500</text>
      </g>
    </svg>
  </main>
</div>

<div class="sheet">
  <section class="dialog">
    <header class="dialog-bar">
      <svg class="dialog-logo"><use href="#q"/></svg><h1>Sprawdzenie poprawności inwentaryzacji</h1>
      <svg class="dialog-close" viewBox="0 0 12 12"><path d="M.5.500l11 11M11.500.500l-11 11" stroke="#000" stroke-width="1.100"/></svg>
    </header>
    <div class="dialog-body">
      <div class="notes">
        <p class="n1">Do obliczeń potrzebne są: pliki .shp wyeksportowane<b class="mask m1"></b></p>
        <p class="n2">oraz pozostałe odpowiadające sprawdzanym plikom), plik</p>
        <p class="n3">"Legenda.csv" (sprawdzenie<b class="mask m2"></b><span>) oraz "Nazwy roślin.cs"</span></p>
        <p class="n4">(sprawdzenie nazw gatunków). Oba pliki csv powstają poprzez zapis</p>
        <p class="n5">wyeksportowanych z <b class="mask m3"></b><span>plików excel do formatu csv z uwzględnieniem</span></p>
        <p class="n6">średnika jako znaku rozdzielajacego (kodowanie utf-8 lub</p>
        <p>windows-1250).</p>
        <p>&nbsp;</p>
        <p>Walidator umożliwia import szablonów poprzez wskazanie katalogu lub</p>
        <p>ręczne ustawienie ścieżek do poszczególnych plików.</p>
        <p>&nbsp;</p>
        <p>Na chwilę obecną sprawdzeniu poddane są:</p>
        <p>- struktura tabeli atrybutów: obecność kolumn, wymagane nazwy,</p>
        <p>typy, długości,</p>
        <div class="hidden-block">
          <svg viewBox="0 0 401 90"><path d="M-2 3.500h4M-2 36h4M-2 52h4M-2 68h4" stroke="#6d8f96"/><path d="M-1.500 21v9" stroke="#6fb0b0"/><path d="M7 2.500h5M111 1v3M116 2v2M121 2v2M128 1v3M133 1v3M144 2v2M169 2v2M186 1v3M192 2v2M205 1v3M211 1v3M297 2v2M325 2v2M339 2v2M348 2v2M376 1v3M384 2v2" stroke="#999"/></svg>
          <b class="mask big"></b>
        </div>
      </div>

      <form class="form">
        <label class="heading">Wczytaj inwentaryzację - dowolna ilość plików (.shp)</label>
        <div class="line wide"><div class="field off"><span class="pre p11">C:</span><b class="mask f1"></b><span class="wal">/WALIDATOR-DANE/BLEDNE/*</span></div><span class="more">...</span></div>
        <label class="heading second">Wczytaj szablony - katalog z plikami</label>
        <div class="line wide"><div class="field off"><span class="pre p16">C:/</span><b class="mask f2"></b><span>\*</span></div><span class="more">...</span></div>
        <label class="heading third">Wczytaj szablony - ręczny wybów plików</label>
        <div class="rows">
          <div class="line"><label>P1.shp</label><div class="field"><span class="pre p11">C:</span><b class="mask r1"></b><span>.shp</span></div><span class="more">...</span></div>
          <div class="line"><label>P2.shp</label><div class="field"><span class="pre p10">C</span><b class="mask r2"></b><span>.shp</span></div><span class="more">...</span></div>
          <div class="line"><label>L1.shp</label><div class="field"><span class="pre p13">C:</span><b class="mask r3"></b><span class="cut">shp</span></div><span class="more">...</span></div>
          <div class="line"><label>L2.shp</label><div class="field"><span class="pre p8">C:</span><b class="mask r4"></b><span class="cut">.shp</span></div><span class="more">...</span></div>
          <div class="line"><label>S1.shp</label><div class="field"><span class="pre p6">C:</span><b class="mask r5"></b><span>shp</span></div><span class="more">...</span></div>
          <div class="line"><label>S2.shp</label><div class="field"><span class="pre p10">C</span><b class="mask r6"></b><span class="gap1">.shp</span></div><span class="more">...</span></div>
          <div class="line"><label>S3.shp</label><div class="field"><span class="pre p15">C:/</span><b class="mask r7"></b><span class="cut">shp</span></div><span class="more">...</span></div>
          <div class="line"><label>Legenda.csv</label><div class="field"><span class="pre p14">C:/</span><b class="mask r8"></b><span class="cut">csv</span></div><span class="more">...</span></div>
          <div class="line"><label>Nazwy<br>roślin.csv</label><div class="field"><span class="pre p13">C:</span><b class="mask r9"></b><span>.csv</span></div><span class="more">...</span></div>
        </div>
        <div class="encoding"><label>Kodowanie csv</label><div class="select"><span>windows-1250</span><svg viewBox="0 0 8 8"><use href="#arrow"/></svg></div></div>
        <div class="check"><i></i><span class="q1">Sprawdzaj pt (porównanie z bazą</span><b class="mask c1"></b><span>, wydłuża czas obliczeń)</span></div>
        <div class="check"><i></i><span class="q2">Sprawdzaj obj_id (porównanie z bazą</span><b class="mask c2"></b><span>, wydłuża czas obliczeń)</span></div>
        <div class="actions"><span class="btn primary">Sprawdź</span><span class="btn">Anuluj</span></div>
      </form>
    </div>
  </section>
</div>
</body>
</html>
```
FILE: styles.css
```css
* { box-sizing: border-box; }
body { margin: 0; width: 1631px; height: 904px; overflow: hidden; position: relative; background: #323232; font-family: "Open Sans", "Noto Sans", sans-serif; font-size: 14px; }
.defs { position: absolute; }
.app { display: flex; flex-direction: column; height: 904px; }

.titlebar { height: 29px; flex: none; background: #fff; display: flex; align-items: center; padding-bottom: 1px; }
.title-logo { width: 19px; height: 19px; margin-left: -3px; margin-right: 6px; flex: none; }
.title-text { color: #8e8e8e; letter-spacing: .03px; }

.menubar { height: 28px; flex: none; display: grid; grid-template-columns: 61px 58px 57px 72px 87px 66px 62px 56px 98px 98px 55px 84px 60px; align-items: center; padding: 0 0 2px 6px; color: #aeaeae; letter-spacing: -.05px; white-space: nowrap; }
.menubar u { text-underline-offset: 2px; }

.toolbar { display: flex; flex: none; align-items: center; }
.toolbar-main { height: 35px; }
.toolbar-layers { height: 45px; border-bottom: 1px solid #222; }
.toolbar svg { width: 36px; height: 24px; flex: none; }
.toolbar svg.framed { height: 35px; border: 1px solid #d98220; padding: 5px 0; }
.toolbar svg.dim { opacity: .45; }
.toolbar svg.dim2 { opacity: .6; }
.toolbar svg.drop { height: 8px; }
.toolbar svg.w17 { width: 17px; }
.toolbar svg.w18 { width: 18px; }
.toolbar svg.w20 { width: 20px; }
.toolbar svg.w28 { width: 28px; }
.toolbar svg.w32 { width: 32px; }
.toolbar svg.abacus { margin-left: 1px; }
.grip { width: 3px; height: 14px; background: #565656; flex: none; }
.grip.first { width: 2px; }
.grip.mid { margin-left: 8px; }
.grip.mid2 { margin: 0 2px 0 7px; }
.rule { flex: none; height: 12px; background: linear-gradient(#1f1f1f, #1f1f1f) center / 1px 100% no-repeat; }
.w10 { width: 10px; }
.w9 { width: 9px; }
.w6 { width: 6px; }
.glyph-a { font: bold 12px "DejaVu Sans", sans-serif; fill: #ccc; }
.one { font: bold 8px "DejaVu Sans", sans-serif; fill: #111; }
.gdal { font: bold 7px "DejaVu Sans", sans-serif; fill: #050505; }

.workspace { flex: 1; display: flex; min-height: 0; }
.panel { width: 289px; flex: none; display: flex; flex-direction: column; padding-right: 8px; }
.panel-title { height: 22px; display: flex; align-items: center; justify-content: center; position: relative; color: #b4b4b4; padding-right: 30px; letter-spacing: .12px; }
.panel-close { position: absolute; right: 5px; top: 4px; width: 10px; height: 10px; }
.panel-tools { height: 31px; display: flex; align-items: center; }
.ptool { width: 27px; height: 20px; flex: none; }
.ptool.on { width: 26px; height: 27px; background: #555; border: 1px solid #1c1c1c; display: flex; align-items: center; justify-content: center; }
.ptool.on svg { width: 20px; height: 20px; }
.prule { width: 1px; height: 12px; background: #222; margin: 0 3px; }
.search { height: 28px; flex: none; background: #898989; border: 1px solid #1c1c1c; border-left: 0; display: flex; align-items: center; gap: 11px; padding-left: 5px; color: #505050; font-size: 13px; letter-spacing: .1px; }
.search svg { width: 16px; height: 16px; }
.tree { flex: 1; margin: 1px 0 0; padding: 1px 0 0; list-style: none; background: #222; border-top: 1px solid #555; border-right: 1px solid #555; color: #dedede; }
.tree li { height: 22px; display: flex; align-items: center; white-space: nowrap; letter-spacing: .17px; }
.tree i { width: 0; height: 0; border: 3.500px solid transparent; border-left: 6px solid #8c8c8c; border-right: 0; margin: 0 14px 0 6px; }
.tree svg { width: 18px; height: 18px; margin-right: 7px; overflow: visible; }

.map { width: 1342px; height: 767px; flex: none; }
.bound { fill: none; stroke: #f00; stroke-width: 3.300; stroke-linejoin: round; }
.dots polyline, .pin { fill: none; marker-start: url(#dot); marker-mid: url(#dot); marker-end: url(#dot); }
.tufts polyline { fill: none; marker-start: url(#tuft); marker-mid: url(#tuft); marker-end: url(#tuft); }
.plot text { font: bold 13px "DejaVu Sans Condensed", "DejaVu Sans", sans-serif; font-stretch: condensed; fill: #e8101c; stroke: #fff; stroke-width: 4px; paint-order: stroke; stroke-linejoin: round; text-anchor: middle; }
.house { font: 10px "DejaVu Sans", sans-serif; fill: #666; }
.park { font: 14px "DejaVu Sans", sans-serif; fill: #3fa6dd; }
.place { font: italic 10px "DejaVu Sans", sans-serif; fill: #555; }
.bluelab { font: 9px "DejaVu Sans", sans-serif; fill: #2a7be0; }
.street { font: 10px "DejaVu Sans", sans-serif; fill: #222; stroke: #fff; stroke-width: 2px; paint-order: stroke; }

.sheet { position: absolute; left: 509px; top: 76px; width: 1100px; height: 784px; background: #fff; padding: 12px 14px 14px; box-shadow: 0 8px 14px rgba(0, 0, 0, .25); font-family: "DejaVu Sans Condensed", "DejaVu Sans", sans-serif; font-stretch: condensed; font-size: 12px; letter-spacing: .33px; color: #acacac; }
.dialog { width: 1072px; height: 758px; background: #323232; border: 1px solid #2b2b2b; border-top-width: 2px; display: flex; flex-direction: column; }
.dialog-bar { height: 37px; flex: none; background: #fff; display: flex; align-items: center; padding: 0 16px 0 9px; color: #000; }
.dialog-logo { width: 20px; height: 20px; margin-right: 5px; }
.dialog-bar h1 { margin: 0; flex: 1; font: normal 14px "Open Sans", "Noto Sans", sans-serif; letter-spacing: .12px; }
.dialog-close { width: 12px; height: 12px; }
.dialog-body { flex: 1; display: flex; padding: 20px 11px 1px 10px; min-height: 0; }
.notes { width: 422px; flex: none; background: #222; border: 1px solid #555; padding: 8px 0 0 7px; white-space: nowrap; }
.notes p { margin: 0; height: 16px; line-height: 16px; position: relative; }
.mask { background: #fff; display: block; flex: none; }
.notes p .mask { position: absolute; }
.notes .m1 { left: 300px; top: 0; width: 83px; height: 18px; }
.notes .m2 { left: 162px; top: -1px; width: 41px; height: 15px; }
.n3 span { position: absolute; left: 202px; }
.notes .m3 { left: 123px; top: -1px; width: 16px; height: 17px; }
.n5 span { position: absolute; left: 142px; }
.hidden-block { position: relative; height: 90px; width: 401px; }
.hidden-block svg { position: absolute; left: 2px; top: 0; width: 401px; height: 90px; overflow: visible; }
.hidden-block .big { position: absolute; left: 2px; top: 4px; width: 401px; height: 86px; }

.form { flex: 1; margin-left: 19px; display: flex; flex-direction: column; white-space: nowrap; }
.heading { text-align: center; height: 16px; line-height: 16px; margin: 13px 0 6px; letter-spacing: .4px; }
.heading.second, .heading.third { margin-top: 32px; }
.line { display: grid; grid-template-columns: 77px 493px 38px; align-items: center; height: 28px; }
.line.wide { grid-template-columns: 570px 38px; }
.line .more { margin-left: 7px; width: 31px; height: 27px; align-self: start; background: #525252; border: 1px solid #222; display: flex; justify-content: center; align-items: center; color: #b0b0b0; }
.rows { display: flex; flex-direction: column; gap: 7px; }
.line label { line-height: 16px; margin: -4px 0; padding-top: 1px; letter-spacing: .28px; }
.field { height: 28px; background: #888; border: 1px solid #141414; padding-left: 5px; display: flex; align-items: center; color: #111; letter-spacing: 0; }
.field span { padding-top: 1px; }
.field.off { background: #323232; color: #505050; }
.pre { overflow: hidden; flex: none; }
.p6 { width: 6px; }
.p8 { width: 8px; }
.p10 { width: 10px; }
.p11 { width: 11px; }
.p13 { width: 13px; }
.p14 { width: 14px; }
.p15 { width: 15px; }
.p16 { width: 16px; }
.field .mask { align-self: flex-start; }
.f1 { width: 124px; height: 17px; margin-top: 4px; }
.f2 { width: 251px; height: 16px; margin-top: 7px; }
.wal { letter-spacing: .6px; }
.r1 { width: 274px; height: 19px; margin-top: 2px; }
.r2 { width: 276px; height: 21px; margin-top: 2px; }
.r3 { width: 277px; height: 16px; margin-top: 7px; }
.r4 { width: 279px; height: 17px; margin-top: 4px; }
.r5 { width: 285px; height: 20px; margin-top: 2px; }
.r6 { width: 276px; height: 21px; margin-top: 3px; }
.r7 { width: 278px; height: 18px; margin-top: 5px; }
.r8 { width: 313px; height: 18px; margin-top: 4px; }
.r9 { width: 332px; height: 20px; margin-top: 5px; }
.field .cut { margin-left: -1px; }
.field .gap1 { margin-left: 1px; }
.encoding { display: flex; align-items: center; margin: 35px 0 0 102px; height: 26px; }
.encoding label { width: 91px; padding-top: 1px; }
.select { width: 314px; height: 26px; border: 1px solid #8a6330; background: linear-gradient(#555, #484848); display: flex; align-items: center; justify-content: space-between; padding: 1px 6px 0 5px; }
.select svg { width: 8px; height: 8px; }
.check { display: flex; align-items: center; margin: 10px 0 0 103px; height: 19px; }
.check + .check { margin-top: 9px; }
.check span { padding-top: 1px; }
.check i { width: 19px; height: 19px; background: #525252; margin-right: 8px; flex: none; }
.q1 { width: 195px; letter-spacing: .47px; }
.q2 { width: 219px; letter-spacing: .47px; }
.c1 { width: 20px; height: 16px; margin-top: 1px; }
.c2 { width: 20px; height: 20px; margin-top: 2px; }
.actions { display: flex; gap: 7px; margin-top: 32px; }
.btn { height: 28px; width: 301px; border: 1px solid #202020; display: flex; align-items: center; justify-content: center; padding-top: 1px; }
.btn.primary { background: #525252; }
```
